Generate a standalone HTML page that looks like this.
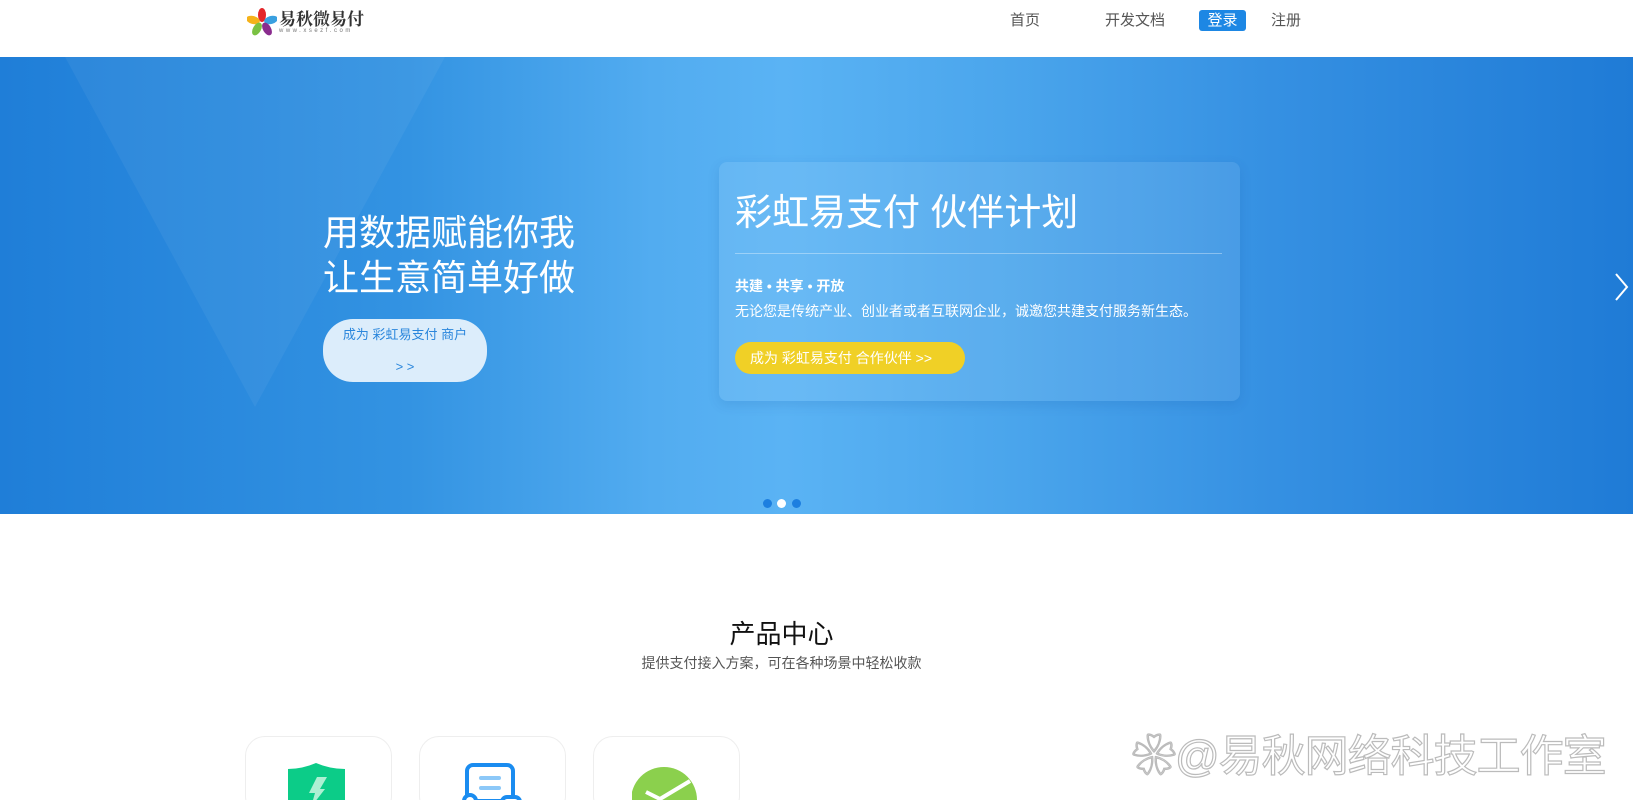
<!DOCTYPE html>
<html style="overflow:hidden;height:800px"><head><meta charset="utf-8"><style>
*{margin:0;padding:0;box-sizing:border-box}
body{width:1633px;height:800px;overflow:hidden;background:#fff;font-family:"Liberation Sans","Noto Sans CJK SC",sans-serif}
#w{position:relative;width:1633px;height:800px;overflow:hidden}
.abs{position:absolute}
.nav a{position:absolute;top:11px;font-size:15px;color:#555;line-height:20px;text-decoration:none}
.banner{position:absolute;left:0;top:57px;width:1633px;height:457px;overflow:hidden;
background:linear-gradient(90deg,#1f7ed8 0%,#3393e2 25%,#52acf0 40%,#5ab3f4 48%,#4aa5ec 62%,#3590e2 78%,#1f7bd6 100%)}
.v{position:absolute;left:65px;top:0;width:0;height:0;border-left:190px solid transparent;border-right:190px solid transparent;border-top:350px solid rgba(255,255,255,.05)}
.h1{position:absolute;left:323px;top:153px;color:#fff;font-size:36px;line-height:45px}
.pill{position:absolute;left:323px;top:262px;width:164px;height:63px;border-radius:30px;background:#dcedfb;color:#2a86dc;font-size:13px;text-align:center;line-height:32px}
.card{position:absolute;left:719px;top:105px;width:521px;height:239px;border-radius:8px;background:rgba(255,255,255,.09);box-shadow:0 4px 12px rgba(0,60,140,.12)}
.card .t{position:absolute;left:16px;top:30px;color:#fff;font-size:37px;line-height:42px}
.card .ln{position:absolute;left:16px;top:91px;width:487px;height:1px;background:rgba(255,255,255,.35)}
.card .s1{position:absolute;left:16px;top:114px;color:#fff;font-size:14px;font-weight:bold}
.card .s2{position:absolute;left:16px;top:139px;color:#fff;font-size:14px}
.card .b{position:absolute;left:16px;top:180px;width:230px;height:32px;border-radius:16px;background:#f0d026;color:#fff;font-size:14px;line-height:32px;padding-left:15px}
.dot{position:absolute;top:442px;width:9px;height:9px;border-radius:50%;background:#1d7fe0}
.pc{position:absolute;top:736px;width:147px;height:80px;border:1px solid #eee;border-radius:20px;background:#fff;overflow:hidden}
</style></head><body><div id="w">
<svg class="abs" style="left:247px;top:8px" width="30" height="28" viewBox="0 0 30 28">
<ellipse cx="15" cy="7" rx="4" ry="7" fill="#e4262a"/>
<ellipse cx="24" cy="12" rx="7" ry="4" fill="#3aa0e0" transform="rotate(-15 24 12)"/>
<ellipse cx="6" cy="12" rx="7" ry="4" fill="#f5b21a" transform="rotate(15 6 12)"/>
<ellipse cx="10" cy="21" rx="4" ry="7" fill="#7ac143" transform="rotate(30 10 21)"/>
<ellipse cx="20" cy="21" rx="4" ry="7" fill="#8a2c8e" transform="rotate(-30 20 21)"/>
</svg>
<div class="abs" style="left:279px;top:8px;font-family:'Noto Serif CJK SC',serif;font-weight:bold;font-size:17px;color:#333;line-height:20px">易秋微易付</div>
<div class="abs" style="left:279px;top:28px;font-size:6px;letter-spacing:2.5px;color:#777">www.xsezf.com</div>
<div class="nav">
<a style="left:1010px">首页</a>
<a style="left:1105px">开发文档</a>
<a style="left:1199px;top:10px;width:47px;height:21px;background:#1d87e4;color:#fff;border-radius:3px;text-align:center;line-height:21px">登录</a>
<a style="left:1271px">注册</a>
</div>
<div class="banner">
<div class="v"></div>
<div class="h1">用数据赋能你我<br>让生意简单好做</div>
<div class="pill">成为 彩虹易支付 商户<br>&gt; &gt;</div>
<div class="card">
<div class="t">彩虹易支付 伙伴计划</div>
<div class="ln"></div>
<div class="s1">共建 • 共享 • 开放</div>
<div class="s2">无论您是传统产业、创业者或者互联网企业，诚邀您共建支付服务新生态。</div>
<div class="b">成为 彩虹易支付 合作伙伴 &gt;&gt;</div>
</div>
<svg class="abs" style="left:1614px;top:215px" width="16" height="30" viewBox="0 0 16 30"><path d="M2 2 L13 15 L2 28" stroke="#fff" stroke-width="2" fill="none"/></svg>
<div class="dot" style="left:763px"></div>
<div class="dot" style="left:777px;background:#fff"></div>
<div class="dot" style="left:792px"></div>
</div>
<div class="abs" style="left:0;width:1563px;top:614px;text-align:center;font-size:26px;color:#111">产品中心</div>
<div class="abs" style="left:0;width:1563px;top:653px;text-align:center;font-size:14px;color:#555">提供支付接入方案，可在各种场景中轻松收款</div>
<div class="pc" style="left:245px"><svg class="abs" style="left:41px;top:26px" width="60" height="50" viewBox="0 0 60 50"><path d="M1 6 Q15 6 29 0 Q43 6 58 6 V50 H1Z" fill="#0ccc88"/><path d="M30 14 L40 14 L33 26 L38 26 L24 44 L28 30 L22 30Z" fill="#aef0d3"/></svg></div>
<div class="pc" style="left:419px"><svg class="abs" style="left:38px;top:26px" width="70" height="50" viewBox="0 0 70 50"><rect x="9" y="2" width="46" height="36" rx="6" fill="none" stroke="#1a8cf0" stroke-width="4"/><rect x="21" y="13" width="22" height="4" rx="2" fill="#8cc8f8"/><rect x="21" y="23" width="22" height="4" rx="2" fill="#8cc8f8"/><circle cx="12" cy="38" r="6" fill="#fff" stroke="#1a8cf0" stroke-width="4"/><rect x="44" y="34" width="18" height="10" rx="5" fill="#fff" stroke="#1a8cf0" stroke-width="4"/></svg></div>
<div class="pc" style="left:593px"><svg class="abs" style="left:38px;top:30px" width="70" height="40" viewBox="0 0 70 40"><circle cx="32" cy="33" r="33" fill="#8bd04d"/><path d="M14 25 L28 32 L58 14" stroke="#fff" stroke-width="4" fill="none"/></svg></div>
<div class="abs" style="left:1132px;top:720px;font-size:44px;color:#fff;-webkit-text-stroke:1.2px #bbb;letter-spacing:-1px">❀@易秋网络科技工作室</div>
</div></body></html>
